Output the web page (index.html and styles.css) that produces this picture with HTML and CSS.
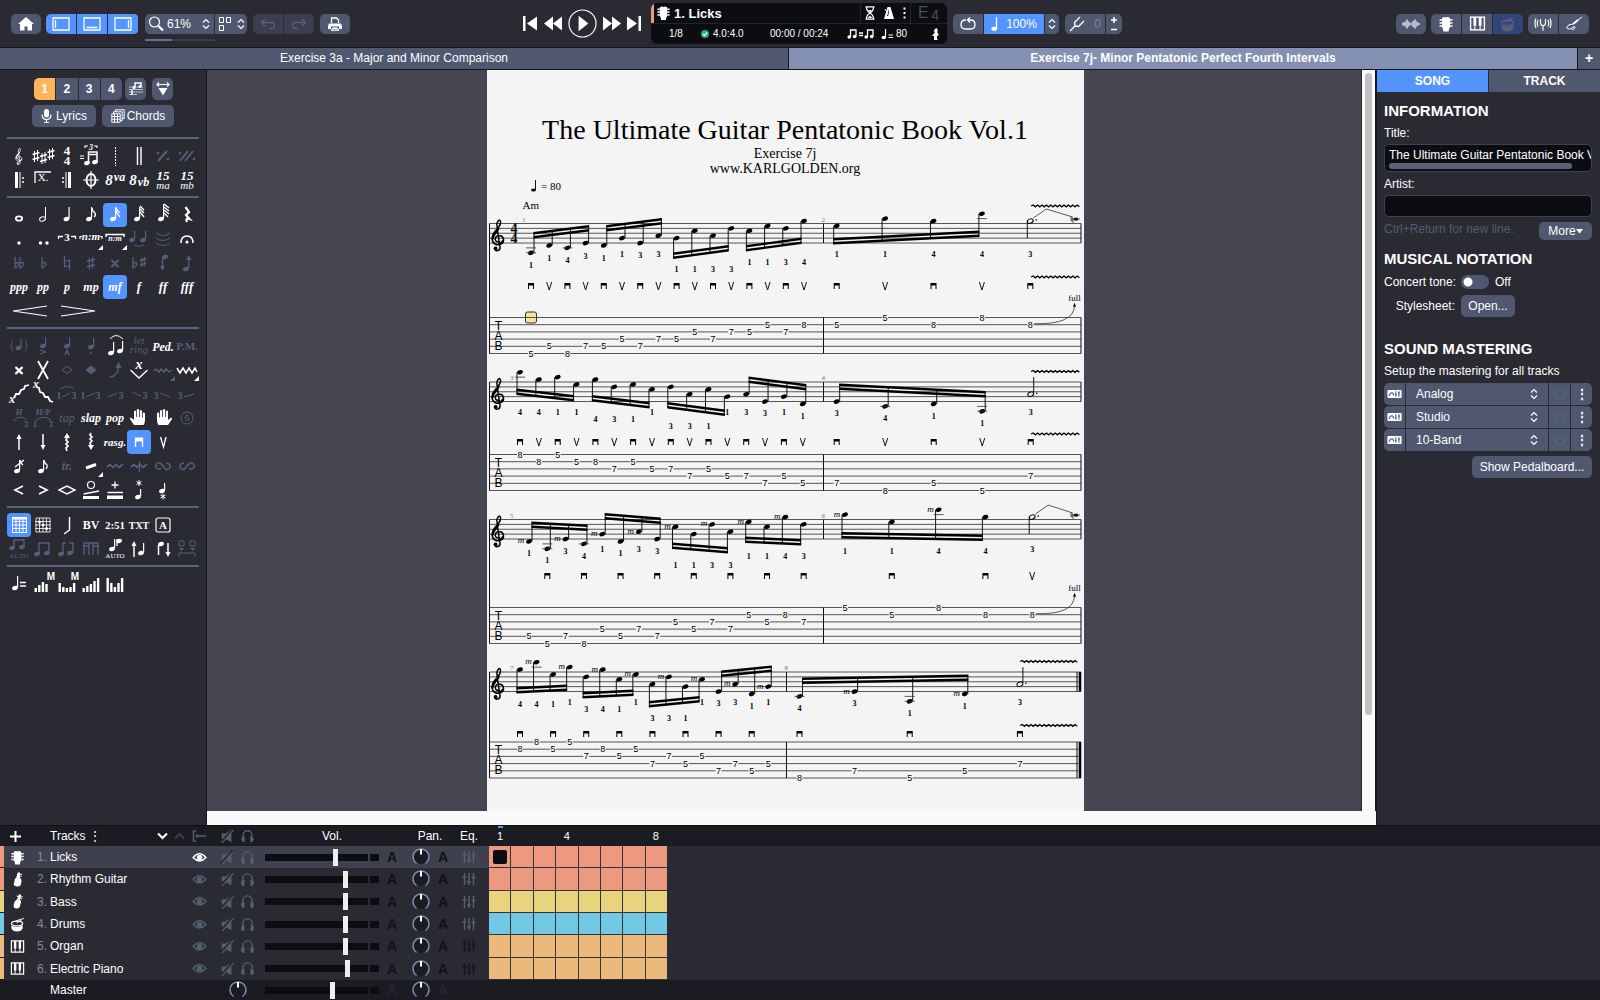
FILE: index.html
```html
<!DOCTYPE html>
<html lang="en">
<head>
<meta charset="utf-8">
<title>Exercise 7j- Minor Pentatonic Perfect Fourth Intervals</title>
<link rel="stylesheet" href="styles.css">
</head>
<body>
<svg class="sprite" aria-hidden="true">
  <symbol id="guitar" viewBox="0 0 16 16"><path d="M4 2Q6 .5 8 1.500Q10 .5 12 2L12 11Q11 12 10.500 15.500H5.500Q5 12 4 11Z"/><path class="ln" stroke-width="1.600" d="M1.500 4H4M1.500 7H4M1.500 10H4M12 4H14.500M12 7H14.500M12 10H14.500"/></symbol>
  <symbol id="axe" viewBox="0 0 16 16"><path d="M8 1Q10-.5 11 1.500L10.500 6Q13 8 12 11Q12 15.500 8 15.500Q3.500 15.500 4 12Q5 10 5 8L7 5Z"/><path class="ln" d="M11 2.500H13M10.500 4.500H12.500"/></symbol>
  <symbol id="bass" viewBox="0 0 16 16"><path d="M9 1Q11-.5 12 1.500L10.500 6Q13 8 11 11Q11 15.500 7 15.500Q3 15 4 12Q4 10 5 8L8 5Z"/><path class="ln" d="M11 3H13.500M10.500 5H13M7 2L8.500 3"/></symbol>
  <symbol id="drum" viewBox="0 0 16 16"><ellipse class="ln" stroke-width="1.300" cx="7.500" cy="7" rx="6" ry="2.500"/><path d="M1.500 9Q7.500 12 13.500 9V12Q12 15.500 7.500 15.500Q3 15.500 1.500 12Z"/><path class="ln" d="M7 6.500L15 1M6 4.500L12 2"/></symbol>
  <symbol id="keys" viewBox="0 0 16 16"><rect class="ln" stroke-width="1.300" x="1.500" y="2" width="13" height="12"/><path class="ln" d="M5.500 9V14M10.500 9V14"/><path d="M4.200 2h2.600v8H4.200zM9.200 2h2.600v8H9.200z"/></symbol>
  <symbol id="eye" viewBox="0 0 16 12"><path class="ln" stroke-width="1.500" d="M1 6Q8-2.500 15 6Q8 13.500 1 6Z"/><circle cx="8" cy="6" r="3"/></symbol>
  <symbol id="mute" viewBox="0 0 16 16"><path d="M2 5H6L13 1V15L6 11H2Z"/><path class="cut" d="M1 15.500L15 .5"/><path class="ln" stroke-width="1.300" d="M2.500 16L15.500 1.500"/></symbol>
  <symbol id="phones" viewBox="0 0 16 16"><path class="ln" stroke-width="1.500" d="M3 11V7A5 5 0 0 1 13 7V11"/><path d="M4.800 8.500V15Q1 15 1 11.700Q1 8.500 4.800 8.500ZM11.200 8.500V15Q15 15 15 11.700Q15 8.500 11.200 8.500Z"/></symbol>
  <symbol id="eq" viewBox="0 0 14 16"><path class="ln" stroke-width="1.500" d="M2.500 2V14M7 2V14M11.500 2V14M.5 6H4.500M5 11H9M9.500 6.500H13.500"/></symbol>
  <symbol id="knob" viewBox="0 0 20 20"><circle class="knob-face" cx="10" cy="10" r="7"/><path class="knob-ring" d="M5.500 16.500A8 8 0 1 1 14.500 16.500"/><path class="knob-mark" d="M10 2V7.500"/></symbol>
  <symbol id="updown" viewBox="0 0 8 12"><path class="ln" stroke-width="1.200" d="M1 4.500L4 1.500L7 4.500M1 7.500L4 10.500L7 7.500"/></symbol>
  <symbol id="clef" viewBox="-8 -21 16 36" overflow="visible"><path class="ln" stroke-width="1.500" d="M1 3C-2 4-4 1-2-1.500C0-4 5-3 5.500 1C6 5 1 7.500-3 5.500C-7 3-7-3-3-7C1-11 3-14 2.500-17C2-19.500 0-19-1-15C-1.500-13 1 2 2 8C2.600 12-1.500 13.500-3 11"/><path class="ln" stroke-width="2" d="M-5.500 1C-5-4-1-7 1-10.500M5.200 2Q3.500 5.500 0 5.600"/><circle cx="-2.400" cy="10" r="2"/></symbol>
  <symbol id="amp" viewBox="0 0 16 9"><rect width="16" height="9" rx="1"/><path class="amp-mark" d="M2 6.500Q3 3 5 3Q7 3 7 6.500M9.500 1.500V7.500M13 1.500V7.500M8.500 5H10.500M12 3.500H14"/></symbol>
  <symbol id="power" viewBox="0 0 14 14"><path class="ln" stroke-width="1.500" d="M4 3A5 5 0 1 0 10 3M7 1V7"/></symbol>
</svg>

<header class="toolbar">
  <div class="tools-left">
    <button class="btn" aria-label="Home"><svg width="16" height="14" viewBox="0 0 16 14"><path d="M8 0L16 7H14V13.500H9.500V9.500H6.500V13.500H2V7H0Z"/></svg></button>
    <div class="group blue">
      <button aria-label="Left panel"><svg width="18" height="14" viewBox="0 0 18 14"><path class="ln" stroke-width="1.300" d="M1 1H17V13H1ZM3.500 3V11"/></svg></button>
      <button aria-label="Bottom panel"><svg width="18" height="14" viewBox="0 0 18 14"><path class="ln" stroke-width="1.300" d="M1 1H17V13H1ZM3.500 10.500H14.500"/></svg></button>
      <button aria-label="Right panel"><svg width="18" height="14" viewBox="0 0 18 14"><path class="ln" stroke-width="1.300" d="M1 1H17V13H1ZM14.500 3V11"/></svg></button>
    </div>
    <div class="zoomer">
      <div class="group">
        <label class="zoom"><svg width="16" height="16" viewBox="0 0 16 16"><circle class="ln" stroke-width="1.200" cx="6.500" cy="6" r="5"/><path class="ln" stroke-width="2.200" d="M10.500 10L15 14.500"/></svg><select aria-label="Zoom"><option>61%</option></select><svg width="8" height="12"><use href="#updown"/></svg></label>
        <button class="layout" aria-label="Page layout"><svg width="14" height="16" viewBox="0 0 14 16"><path class="ln" d="M1.500 1.500H5.500V6.500H1.500ZM8.500 1.500H12.500V6.500H8.500ZM1.500 9.500H5.500V14.500H1.500Z"/></svg><svg width="8" height="12"><use href="#updown"/></svg></button>
      </div>
      <div class="zoom-bar"></div>
    </div>
    <div class="group off">
      <button aria-label="Undo"><svg width="16" height="12" viewBox="0 0 16 12"><path class="ln" stroke-width="1.300" d="M5 1L1.500 4.500L5 8M1.500 4.500H11Q14.500 4.500 14.500 7.500Q14.500 10.500 11 10.500H9.500"/></svg></button>
      <button aria-label="Redo"><svg width="16" height="12" viewBox="0 0 16 12"><path class="ln" stroke-width="1.300" d="M11 1L14.500 4.500L11 8M14.500 4.500H5Q1.500 4.500 1.500 7.500Q1.500 10.500 5 10.500H6.500"/></svg></button>
    </div>
    <button class="btn" aria-label="Print"><svg width="14" height="14" viewBox="0 0 14 14"><path class="ln" stroke-width="1.300" d="M3.500 6V1H8.500L10.500 3V6"/><path fill-rule="evenodd" d="M1 6.500H13L14 9V12H0V9ZM3 9.500V13.800H11V9.500ZM4.200 10.500H9.800V12.600H4.200Z"/></svg></button>
  </div>

  <div class="tools-mid">
    <div class="transport">
      <button aria-label="First bar"><svg width="14" height="15" viewBox="0 0 14 15"><path d="M0 0H2.500V15H0ZM14 .5V14.500L4 7.500Z"/></svg></button>
      <button aria-label="Rewind"><svg width="18" height="15" viewBox="0 0 18 15"><path d="M9 .5V14.500L0 7.500ZM18 .5V14.500L9 7.500Z"/></svg></button>
      <button aria-label="Play"><svg width="29" height="29" viewBox="0 0 30 30"><circle class="ln" stroke-width="1.200" cx="15" cy="15" r="14"/><path d="M11 7V23L21 15Z"/></svg></button>
      <button aria-label="Forward"><svg width="18" height="15" viewBox="0 0 18 15"><path d="M0 .5V14.500L9 7.500ZM9 .5V14.500L18 7.500Z"/></svg></button>
      <button aria-label="Last bar"><svg width="14" height="15" viewBox="0 0 14 15"><path d="M11.500 0H14V15H11.500ZM0 .5V14.500L10 7.500Z"/></svg></button>
    </div>
    <div class="display">
      <div class="row1">
        <div class="track-now"><svg width="15" height="16"><use href="#guitar"/></svg><b>1. Licks</b></div>
        <div class="clicks">
          <svg width="10" height="14" viewBox="0 0 10 14"><path class="ln" stroke-width="1.300" d="M.5 .8H9.500M.5 13.200H9.500M1.500 1Q1.500 5 5 7Q8.500 9 8.500 13M8.500 1Q8.500 5 5 7Q1.500 9 1.500 13"/><path d="M3 4H7L5 6.500ZM2.500 12L5 9.500L7.500 12Z"/></svg>
          <svg width="12" height="14" viewBox="0 0 12 14"><path fill-rule="evenodd" d="M4.500 1H7.500L11 13H1ZM5.500 3L4 10H6Z"/><path class="ln" d="M6 10L2 3"/></svg>
          <svg width="3" height="12" viewBox="0 0 3 12"><path d="M.5 .5h2v2h-2zM.5 5h2v2h-2zM.5 9.500h2v2h-2z"/></svg>
        </div>
        <div class="chord">E <span>4</span></div>
      </div>
      <div class="row2">
        <span class="bar-no">1/8</span>
        <span class="beat"><svg width="8" height="8" viewBox="0 0 8 8"><circle class="ok" cx="4" cy="4" r="4"/><path class="ln" stroke-width="1.200" d="M2 4L3.500 5.500L6 2.500"/></svg>4.0:4.0</span>
        <span class="clock">00:00 / 00:24</span>
        <svg width="27" height="11" viewBox="0 0 27 11"><path class="ln" stroke-width="1.300" d="M3.500 9V2H9V8M20.500 9V2H26V8M12 5H16M12 7.500H16"/><circle cx="2.200" cy="9" r="1.800"/><circle cx="7.700" cy="8.500" r="1.800"/><circle cx="19.200" cy="9" r="1.800"/><circle cx="24.700" cy="8.500" r="1.800"/></svg>
        <span class="tempo"><svg width="12" height="12" viewBox="0 0 12 12"><path class="ln" stroke-width="1.200" d="M4.500 9.500V1M7.500 7H12M7.500 9.500H12"/><ellipse cx="2.800" cy="9.500" rx="2.200" ry="1.700"/></svg>80</span>
        <svg class="capo" width="7" height="12" viewBox="0 0 7 12"><path d="M1.500 3L4 0L5.500 1V5L7 7L5 8V11L6 12H2V8H0L3 4Z"/></svg>
      </div>
    </div>
    <div class="group speed">
      <button class="loop" aria-label="Loop"><svg width="16" height="14" viewBox="0 0 16 14"><path class="ln" stroke-width="1.300" d="M6 3H5.500Q1 3 1 7.500Q1 12 5.500 12H10.500Q15 12 15 7.500Q15 3 10.500 3H7.500M10 .5L7.500 3L10 5.500"/></svg></button>
      <button class="rate"><svg width="8" height="14" viewBox="0 0 8 14"><path class="ln" stroke-width="1.300" d="M5.500 12V0"/><ellipse cx="3.200" cy="11.800" rx="2.800" ry="2"/></svg>100%</button>
      <button class="step" aria-label="Speed step"><svg width="8" height="12"><use href="#updown"/></svg></button>
    </div>
    <div class="group tune">
      <button class="fork"><svg width="16" height="16" viewBox="0 0 16 16"><path class="ln" stroke-width="1.400" d="M1 15L6 10M6 10L5.500 6.500L11 1M6 10L9.500 10.500L15 5"/></svg><span>0</span></button>
      <button class="step" aria-label="Transpose"><svg width="8" height="16" viewBox="0 0 8 16"><path class="ln" stroke-width="1.500" d="M1 4H7M4 1V7M1 13.500H7"/></svg></button>
    </div>
  </div>

  <div class="tools-right">
    <button class="btn" aria-label="Audio"><svg width="18" height="12" viewBox="0 0 18 12"><path class="ln" stroke-width="1.200" d="M1 4.500V7.500M3 3.500V8.500M5 1.500V10.500M7 3.500V8.500M9 5V7M11 3V9M13 1.500V10.500M15 3.500V8.500M17 5V7"/></svg></button>
    <div class="group">
      <button aria-label="Fretboard"><svg width="16" height="16"><use href="#guitar"/></svg></button>
      <button aria-label="Keyboard"><svg width="17" height="17"><use href="#keys"/></svg></button>
      <button class="drum-off" aria-label="Drum pads"><svg width="16" height="16"><use href="#drum"/></svg></button>
    </div>
    <div class="group">
      <button aria-label="Tuner"><svg width="18" height="14" viewBox="0 0 18 14"><path class="ln" stroke-width="1.200" d="M6.500 2V6Q6.500 8.500 9 8.500Q11.500 8.500 11.500 6V2M9 8.500V13.500M4 3Q2.500 6 4 9.500M14 3Q15.500 6 14 9.500M2 1.500Q0 6 2 11M16 1.500Q18 6 16 11"/></svg></button>
      <button aria-label="Line in"><svg width="18" height="14" viewBox="0 0 18 14"><path class="ln" stroke-width="2" d="M8 7L13 3"/><path class="ln" d="M13 3L17 0M8 7Q1 8 2 11Q4 13.500 7 11Q9 9 10 10Q10 12 7 13"/></svg></button>
    </div>
  </div>
</header>

<nav class="tabs">
  <a href="#ex3a">Exercise 3a - Major and Minor Comparison</a>
  <a href="#ex7j" class="active">Exercise 7j- Minor Pentatonic Perfect Fourth Intervals</a>
  <button aria-label="New tab">+</button>
</nav>

<main class="workspace">
  <aside class="palette">
    <div class="voices">
      <div class="group"><button class="cur">1</button><button>2</button><button>3</button><button>4</button></div>
      <button class="sq" aria-label="Multivoice"><svg width="14" height="14" viewBox="0 0 14 14"><path class="ln" d="M0 5H14M0 7.500H14M0 10H14M0 12.500H8" opacity=".6"/><path class="ln" stroke-width="1.500" d="M6 5V1H12V4M3 13V8"/><circle cx="5" cy="5.500" r="1.600"/><circle cx="11" cy="4.500" r="1.600"/></svg></button>
      <button class="sq wide-gap" aria-label="Design mode"><svg width="14" height="14" viewBox="0 0 14 14"><path class="ln" stroke-width="1.200" d="M1 2.500H13M3 .5L1 2.500L3 4.500M11 .5L13 2.500L11 4.500"/><path d="M2.500 6H11.500L7 13.500Z"/></svg></button>
    </div>
    <div class="words">
      <button><svg width="11" height="14" viewBox="0 0 11 14"><rect x="3" y="0" width="5" height="8.500" rx="2.500"/><path class="ln" stroke-width="1.200" d="M1 5.500Q1 10.500 5.500 10.500Q10 10.500 10 5.500M5.500 10.500V13.500M3 13.500H8"/></svg>Lyrics</button>
      <button class="chords"><svg width="14" height="14" viewBox="0 0 14 14"><path class="ln" d="M4.500 3V.8H13.200V9.500H11M2.500 5V2.800H11.200V11.500H9M.8 4.800H9.200V13.200H.8ZM3.500 5V13M6.500 5V13M1 7.500H9M1 10.200H9"/></svg>Chords</button>
    </div>
    <div id="palette"></div>
  </aside>

  <section class="viewer">
    <div class="canvas">
      <article class="sheet">
        <h1>The Ultimate Guitar Pentatonic Book Vol.1</h1>
        <p>Exercise 7j</p>
        <p>www.KARLGOLDEN.org</p>
        <svg id="score" width="597" height="635" viewBox="487 176 597 635" role="img" aria-label="Score"></svg>
      </article>
    </div>
    <div class="scroll"><div class="thumb"></div></div>
  </section>

  <aside class="inspector">
    <div class="itabs"><button class="active">SONG</button><button>TRACK</button></div>
    <form>
      <h2>INFORMATION</h2>
      <label class="cap" for="title">Title:</label>
      <div class="field"><input id="title" type="text" value="The Ultimate Guitar Pentatonic Book Vol.1"><div class="hbar"></div></div>
      <label class="cap" for="artist">Artist:</label>
      <div class="field"><input id="artist" type="text"></div>
      <div class="hint"><span>Ctrl+Return for new line.</span><button type="button" class="more">More<svg width="7" height="5" viewBox="0 0 7 5"><path d="M0 0H7L3.500 4.500Z"/></svg></button></div>
      <h2>MUSICAL NOTATION</h2>
      <div class="line"><label for="tone">Concert tone:</label><input id="tone" type="checkbox" class="switch"><span>Off</span></div>
      <div class="line style"><span class="lab">Stylesheet:</span><button type="button" class="open">Open...</button></div>
      <h2 class="sound">SOUND MASTERING</h2>
      <p class="setup">Setup the mastering for all tracks</p>
      <div class="fx"><button type="button" aria-label="Analog effect"><svg width="15" height="8"><use href="#amp"/></svg></button><label><select aria-label="Analog"><option>Analog</option></select><svg width="8" height="12"><use href="#updown"/></svg></label><button type="button" class="pw" aria-label="Power"><svg width="14" height="14"><use href="#power"/></svg></button><button type="button">⋮</button></div>
      <div class="fx"><button type="button" aria-label="Studio effect"><svg width="15" height="8"><use href="#amp"/></svg></button><label><select aria-label="Studio"><option>Studio</option></select><svg width="8" height="12"><use href="#updown"/></svg></label><button type="button" class="pw" aria-label="Power"><svg width="14" height="14"><use href="#power"/></svg></button><button type="button">⋮</button></div>
      <div class="fx"><button type="button" aria-label="Equalizer effect"><svg width="15" height="8"><use href="#amp"/></svg></button><label><select aria-label="10-Band"><option>10-Band</option></select><svg width="8" height="12"><use href="#updown"/></svg></label><button type="button" class="pw" aria-label="Power"><svg width="14" height="14"><use href="#power"/></svg></button><button type="button">⋮</button></div>
      <button type="button" class="pedal">Show Pedalboard...</button>
    </form>
  </aside>
</main>

<footer class="mixer">
  <div class="trow head">
    <button class="plus" aria-label="Add track"><svg width="11" height="11" viewBox="0 0 11 11"><path class="ln" stroke-width="2" d="M0 5.500H11M5.500 0V11"/></svg></button>
    <div class="tname"><span>Tracks&nbsp;⋮</span><svg width="28" height="8" viewBox="0 0 28 8"><path class="ln" stroke-width="2" d="M1 1.500L5.500 6L10 1.500"/><path class="ln fade" stroke-width="2" d="M18 6.500L22.500 2L27 6.500"/></svg></div>
    <svg class="dimico" width="14" height="12" viewBox="0 0 14 12"><path class="ln" stroke-width="1.500" d="M4 1H1.500V11H4M4 6H14M5 4V8"/></svg>
    <svg class="dimico" width="14" height="14"><use href="#mute"/></svg>
    <svg class="dimico" width="15" height="14"><use href="#phones"/></svg>
    <span class="vol-h">Vol.</span><span class="pan-h">Pan.</span><span>Eq.</span>
    <div class="ruler"><span>1</span><span></span><span></span><span>4</span><span></span><span></span><span></span><span>8</span></div>
  </div>
  <div class="rows" id="tracks"></div>
  <div class="trow master">
    <span class="tname">Master</span>
    <svg class="mknob" width="20" height="20"><use href="#knob"/></svg>
    <input type="range" aria-label="Master volume" value="60">
    <b class="auto">A</b>
    <svg width="20" height="20"><use href="#knob"/></svg>
    <b class="auto">A</b>
  </div>
</footer>
<script src="app.js"></script>
</body>
</html>
```
FILE: styles.css
```css
* { box-sizing: border-box; }
:root { --bg: #2a2a33; --btn: #505870; --blue: #5494ff; --dark: #1b1c22; --black: #0c0d11; --paper: #f4f4f4; }
html, body { height: 100%; }
body { margin: 0; display: grid; grid-template-rows: 48px 22px 1fr 175px; grid-template-columns: minmax(0, 1fr); background: var(--bg); color: #fff; font: 12px "Liberation Sans", Arial, sans-serif; overflow: hidden; }
button, input, select { font: inherit; color: inherit; border: 0; margin: 0; padding: 0; background: none; appearance: none; }
button { display: flex; align-items: center; justify-content: center; }
svg { fill: currentColor; flex: none; }
.sprite { position: absolute; width: 0; height: 0; }
.ln { fill: none; stroke: currentColor; }
.cut { fill: none; stroke: var(--bg); stroke-width: 3; }
.knob-face { fill: #1b1c22; }
.knob-ring { fill: none; stroke: #8490b8; stroke-width: 1.5; }
.knob-mark { fill: none; stroke: #fff; stroke-width: 2; }
.amp-mark { fill: none; stroke: var(--btn); stroke-width: 1.2; }
h1, h2, p { margin: 0; }

/* toolbar */
.toolbar { display: flex; align-items: center; padding: 0 11px; border-bottom: 1px solid #15161b; }
.tools-left, .tools-right { display: flex; gap: 5px; }
.tools-left > :nth-child(n+3) { margin-left: 1px; }
.tools-right { margin-left: auto; }
.btn { width: 30px; height: 20px; background: var(--btn); border-radius: 5px; }
.group { display: flex; gap: 1px; border-radius: 5px; overflow: hidden; height: 20px; }
.group > * { background: var(--btn); width: 30px; height: 100%; }
.group.blue > * { background: var(--blue); width: 30px; }
.group.blue { width: 93px; }
.group.off > * { background: #3a3e4e; color: #5a6078; }
.zoomer { position: relative; }
.group .zoom { width: 69px; display: flex; align-items: center; padding: 0 4px 0 3px; gap: 2px; }
.zoom select { width: 42px; font-size: 12px; padding-left: 1px; }
.group .layout { width: 32px; gap: 5px; }
.zoom-bar { position: absolute; left: 0; top: 25px; width: 70px; height: 2px; background: linear-gradient(90deg, #6c7288 39%, #383c4a 39%); }
.tools-mid { display: flex; align-items: center; margin-left: 173px; }
.transport { display: flex; align-items: center; gap: 6px; padding-right: 10px; }
.transport button:nth-child(1) { margin-right: 1px; }
.display { width: 296px; height: 41px; background: var(--black); border-radius: 6px; overflow: hidden; margin-right: 6px; }
.row1 { display: grid; grid-template-columns: 1fr 51px 36px; height: 21px; border-bottom: 1px solid #22242c; }
.track-now { display: flex; align-items: center; gap: 3px; font-size: 13px; border-left: 3px solid #ed9980; padding-left: 2px; }
.clicks { display: flex; align-items: center; justify-content: space-around; border-left: 1px solid #22242c; border-right: 1px solid #22242c; }
.chord { color: #474c66; font-size: 16px; padding: 1px 0 0 7px; }
.chord span { font-size: 14px; position: relative; top: 2px; left: -2px; }
.row2 { display: flex; align-items: center; height: 19px; font-size: 10px; padding-left: 18px; }
.bar-no { width: 32px; }
.beat { display: flex; align-items: center; gap: 4px; width: 69px; }
.clock { width: 77px; }
.row2 > svg { margin-right: 7px; }
.tempo { display: flex; align-items: center; gap: 3px; width: 51px; }
.ok { fill: #22b573; }
.row2 .capo { margin: 0; }
.speed { width: 106px; margin-right: 6px; }
.speed .rate { width: 60px; background: var(--blue); gap: 7px; }
.speed .step { width: 14px; }
.tune .fork { width: 40px; gap: 9px; color: #fff; }
.fork span { color: #7f8597; }
.tune .step { width: 16px; }
.tools-right .drum-off { background: #30457a; color: #5a6078; }

/* document tabs */
.tabs { display: grid; grid-template-columns: 1fr 1fr 22px; gap: 1px; background: #15161b; border-bottom: 1px solid #15161b; }
.tabs > * { background: var(--btn); color: #fff; text-decoration: none; text-align: center; line-height: 21px; }
.tabs .active { background: #8490b2; font-weight: bold; }
.tabs button { font-weight: bold; font-size: 14px; }

.workspace { display: grid; grid-template-columns: 207px minmax(0, 1fr) 224px; min-height: 0; }

/* palette */
.palette { border-right: 1px solid #17181d; padding: 8px 7px 0; overflow: hidden; }
.voices { display: flex; margin-left: 27px; gap: 3px; }
.voices .group { height: 22px; width: 88px; font-weight: bold; }
.voices .group > * { flex: 1; }
.voices .group .cur { background: #ffb45c; }
.sq { width: 21px; height: 22px; border-radius: 5px; background: var(--btn); }
.wide-gap { margin-left: 3px; }
.words { display: flex; gap: 6px; margin: 5px 0 10px 25px; }
.words button { width: 64px; height: 22px; border-radius: 5px; background: var(--btn); gap: 4px; }
.words .chords { width: 72px; gap: 2px; }
.bank { display: grid; grid-template-columns: repeat(8, 24px); grid-auto-rows: 24px; border-top: 2px solid #59627f; padding: 5px 0 4px; }
.tool { width: 24px; height: 24px; border-radius: 4px; overflow: visible; }
.tool.wide { width: 48px; grid-column: span 2; }
.tool svg { overflow: visible; }
.tool.off { color: #565e7c; }
.tool.on { background: var(--blue); }
.serif { font-family: "Liberation Serif", "Times New Roman", serif; text-anchor: middle; }
.bi { font-weight: bold; font-style: italic; }
.it { font-style: italic; }
.bd { font-weight: bold; }
.sans { font-family: "Liberation Sans", Arial, sans-serif; text-anchor: middle; }

/* viewer */
.viewer { display: grid; grid-template-columns: minmax(0, 1fr) 14px; padding-bottom: 14px; background: #fafafa; min-height: 0; }
.canvas { background: #454651; display: flex; justify-content: center; overflow: hidden; border-right: 1px solid #26262e; padding-left: 2px; }
.sheet { background: var(--paper); color: #000; width: 597px; flex: none; padding-top: 44px; text-align: center; font: 14px/15px "Liberation Serif", "Times New Roman", serif; }
.sheet h1 { font-size: 28px; line-height: 32px; font-weight: normal; }
.sheet svg { display: block; }
.scroll { padding: 3px 3px 0 3px; border-right: 1px solid #17181d; }
.thumb { height: 87%; width: 7px; border-radius: 4px; background: #c1c1c1; }
.staffline { stroke: #111; stroke-width: 1; fill: none; stroke-opacity: .7; }
.barline { stroke: #111; stroke-width: 1; fill: none; }
.thick { stroke: #000; stroke-width: 2.5; fill: none; }
.hair { stroke: #333; stroke-width: .8; fill: none; }
.vee { stroke: #111; stroke-width: 1; fill: none; }
.wave { stroke: #000; stroke-width: 1.3; fill: none; }
.beam { fill: #000; }
.mask { fill: var(--paper); }
.num { font-size: 8px; text-anchor: middle; font-family: "Liberation Serif", serif; font-weight: bold; }
.fret { font-size: 9px; text-anchor: middle; font-family: "Liberation Sans", sans-serif; }
.mno { font-size: 7px; fill: #777; }
.full { font-size: 9px; text-anchor: middle; }
.tabword { font: 12px "Liberation Sans", sans-serif; text-anchor: middle; }
.meter { font: bold 14px "Liberation Serif", serif; text-anchor: middle; }
.mark { font-size: 11px; text-anchor: start; font-family: "Liberation Serif", serif; }
.mute { font: italic 9px "Liberation Serif", serif; text-anchor: middle; }
.cursor { fill: #fae0a0; stroke: #333; }

/* inspector */
.inspector { border-left: 1px solid #17181d; overflow: hidden; }
.itabs { display: grid; grid-template-columns: 1fr 1fr; gap: 1px; height: 22px; font-weight: bold; }
.itabs button { background: var(--btn); }
.itabs .active { background: var(--blue); }
.inspector form { padding: 9px 8px 0 7px; }
.inspector h2 { font-size: 15px; line-height: 20px; }
.cap { display: block; line-height: 16px; margin: 4px 0 3px; }
.field { border: 1px solid #3b4254; border-radius: 5px; background: var(--black); padding: 2px 0 2px 4px; }
.field input { display: block; width: 100%; height: 16px; outline: 0; }
.hbar { width: 183px; height: 6px; border-radius: 3px; background: #59617c; }
.hint { display: flex; justify-content: space-between; color: #545b74; line-height: 20px; margin: 2px 0 9px; }
.hint button, .open, .pedal { background: var(--btn); border-radius: 5px; color: #fff; }
.more { width: 53px; height: 18px; margin-top: 3px; }
.line { display: grid; grid-template-columns: 71px 28px 1fr; column-gap: 6px; align-items: center; height: 22px; margin-top: 2px; white-space: nowrap; }
.line.style { margin-top: 2px; grid-template-columns: 71px 54px; }
.lab { text-align: right; }
.open { height: 22px; }
.switch { width: 28px; height: 14px; border-radius: 7px; background: radial-gradient(circle at 7px 7px, #fff 4px, var(--btn) 5px); }
.inspector .sound { margin-top: 22px; }
.setup { line-height: 16px; margin: 4px 0; }
.fx { display: grid; grid-template-columns: 21px 1fr 21px 21px; gap: 1px; height: 22px; margin-bottom: 1px; border-radius: 5px; overflow: hidden; }
.fx > * { background: var(--btn); }
.fx label { display: flex; align-items: center; padding: 0 10px; }
.fx select { flex: 1; }
.pw { color: #4c6b74; }
.fx button { font-weight: bold; }
.pedal { width: 120px; height: 22px; margin: 5px 0 0 auto; }

/* mixer */
.mixer { background: var(--dark); border-top: 1px solid #101115; display: grid; grid-template-rows: 20px 134px 20px; }
.rows { display: grid; grid-template-rows: repeat(6, 1fr); background: var(--bg); }
.trow { display: grid; grid-template-columns: 4px 26px 20px 135px 28px 27px 15px 124px 26px 32px 12px 40px 178px; align-items: center; justify-items: center; }
.trow .strip { align-self: stretch; justify-self: stretch; border-bottom: 1px solid var(--dark); }
.trow.sel { background: linear-gradient(90deg, #3e404e 489px, var(--bg) 489px); }
.tno { justify-self: end; padding-right: 3px; color: #868a9c; }
.tname { justify-self: start; }
.dimico, .trow .dim { color: #50626f; }
.trow .dark { color: #15161b; }
.auto { color: #101115; font-size: 14px; }
.trow input[type=range] { width: 114px; height: 17px; justify-self: end; background: linear-gradient(90deg, var(--black) 103px, transparent 103px, transparent 105px, var(--black) 105px) center / 114px 7px no-repeat; }
input[type=range]::-webkit-slider-thumb { appearance: none; width: 5px; height: 17px; background: #eee; }
.cells { display: grid; grid-template-columns: repeat(8, 1fr); gap: 1px; align-self: stretch; justify-self: stretch; padding-bottom: 1px; background: #33333b; }
.cells i { display: block; }
.salmon i, .strip.salmon { background: #ed9980; }
.yellow i, .strip.yellow { background: #e9d37c; }
.sky i, .strip.sky { background: #72c9e3; }
.sand i, .strip.sand { background: #ebb97b; }
.cells .here { display: grid; place-items: center; }
.here::after { content: ""; width: 14px; height: 14px; border-radius: 2px; background: #0c0d11; }
.head .plus { grid-column: 2; padding-right: 4px; }
.head .tname { grid-column: 4; justify-self: stretch; display: flex; justify-content: space-between; align-items: center; }
.fade { color: #3a3c46; }
.vol-h { padding-left: 30px; }
.pan-h { grid-column: 10; padding-left: 18px; }
.head > span:last-of-type { grid-column: 12; }
.ruler { display: grid; grid-template-columns: repeat(8, 1fr); align-self: stretch; justify-self: stretch; text-align: center; font-size: 11px; line-height: 20px; background: linear-gradient(var(--blue), var(--blue)) 9px 0 / 5px 2px no-repeat; }
.master .tname { grid-column: 4; }
.master .mknob { grid-column: 6 / 8; margin-left: 7px; }
.master .auto { color: #25262d; }
```
FILE: app.js
```js
/* ---- shared glyph helpers ---- */
const line = (d, w = 1) => `<path class="ln" stroke-width="${w}" d="${d}"/>`;
const dot = (x, y, r = 1) => `<circle cx="${x}" cy="${y}" r="${r}"/>`;
const head = (x, y, open) => `<ellipse cx="${x}" cy="${y}" rx="3" ry="2.1" transform="rotate(-22 ${x} ${y})"${open ? ' class="ln"' : ''}/>`;
const note = (x, y, len = 12) => head(x, y) + line(`M${x + 2.6} ${y - 1}V${y - len}`, 1.2);
const txt = (s, size, x = 12, y = 16, c = 'bi') => `<text class="serif ${c}" font-size="${size}" x="${x}" y="${y}">${s}</text>`;
const sharp = (x, y, s = 1) => `<g transform="translate(${x} ${y}) scale(${s})">${line('M-1.500 -5V6M1.500 -6V5')}${line('M-3.500 -1.500L3.500 -3.500M-3.500 3.500L3.500 1.500', 1.8)}</g>`;
const flat = (x, y) => line(`M${x} ${y - 7}V${y + 4}C${x + 6} ${y + 1} ${x + 4} ${y - 4} ${x} ${y}`, 1.3);
const corner = '<path d="M24 18V23H19Z"/>';
const hand = '<path d="M7 19L3 13Q2.500 11 4.500 12L7 14V5Q8.500 4 9 5.500V11H9.800V3.500Q11.500 2.500 12 4V11H12.800V4Q14.500 3.500 15 5V11.500H15.800V6.500Q17.500 6 18 7.500V14Q18 17 16.500 19Z"/>';
const bars = (hs, base = 20) => hs.map((h, i) => `<rect x="${3.500 + i * 3.6}" y="${base - h}" width="2.400" height="${h}"/>`).join('');

const banks = [
  [
    ['Clef', '<use href="#clef" x="7" y="3" width="10" height="19"/>'],
    ['Key signature', sharp(5, 12, 1) + sharp(12.5, 14, 1) + sharp(20, 10, 1)],
    ['Time signature', txt('4', 13, 12, 11, 'bd') + txt('4', 13, 12, 21, 'bd')],
    ['Triplet feel', line('M1 12H5M1 14.500H5M6 4V2H9M15 2H18V4', 1.2) + txt('3', 8, 12, 6) + line('M9.500 19V8H18V18M9.500 10.500H18', 1.5) + head(8, 19) + head(16, 18)],
    ['Free time', '<path class="ln" stroke-dasharray="2 1" d="M12.500 3V22"/>'],
    ['Double bar', line('M10.500 3V21M14 3V21', 1.4)],
    ['Repeat bar', line('M7 17L16 7', 2) + dot(7, 9, 1.3) + dot(17, 15, 1.3), 'off'],
    ['Repeat two bars', line('M5 17L13 7M10 17L18 7', 2) + dot(5, 9, 1.3) + dot(19, 15, 1.3), 'off'],
    ['Repeat open', line('M9.500 4V20', 3) + line('M13 4V20') + dot(16, 10) + dot(16, 14)],
    ['Alternate ending', line('M4 15V4H20', 1.3) + txt('X.', 11, 12, 13, '')],
    ['Repeat close', line('M14.500 4V20', 3) + line('M11 4V20') + dot(8, 10) + dot(8, 14)],
    ['Coda', '<ellipse class="ln" stroke-width="2" cx="12" cy="12" rx="4.500" ry="6"/>' + line('M12 3V21M4 12H20', 1.2)],
    ['Ottava alta', txt('8', 15, 6, 17) + txt('va', 12, 16.5, 13)],
    ['Ottava bassa', txt('8', 15, 6, 17) + txt('vb', 12, 16.5, 18)],
    ['Quindicesima alta', txt('15', 13, 12, 12) + txt('ma', 11, 12, 21, 'it')],
    ['Quindicesima bassa', txt('15', 13, 12, 12) + txt('mb', 11, 12, 21, 'it')],
  ], [
    ['Whole', '<ellipse class="ln" stroke-width="1.800" cx="12" cy="15.500" rx="3.200" ry="2.200"/>'],
    ['Half', head(11.5, 16, 1) + line('M14.500 15V4')],
    ['Quarter', note(11.5, 16)],
    ['Eighth', note(10, 16) + line('M13 5Q13 8 16 10Q17 13 15 14', 1.3)],
    ['Sixteenth', note(10, 16) + line('M13 5Q14 8 17 10M13 8Q14 11 17 14', 1.3), 'on'],
    ['Thirty-second', note(10, 16) + line('M13 3L17 7M13 6L17 10M13 9L17 14', 1.4)],
    ['Sixty-fourth', note(10, 16, 15) + line('M13 1L18 5M13 4L18 8M13 7L18 11M13 10L17 14', 1.4)],
    ['Rest', line('M10.500 4L14 9L11 12L14.500 16Q10 14.500 12 19', 2.2)],
    ['Dotted', dot(12, 16, 1.7)],
    ['Double dotted', dot(9.500, 16, 1.7) + dot(16, 16, 1.7)],
    ['Triplet', txt('3', 11, 12, 14, 'bd') + line('M3.500 12V9.500H8M16 9.500H20.500V12', 1.3)],
    ['Tuplet', txt('n:m', 11, 12, 13) + line('M1 12V9.500H3M21 9.500H23V12', 1.2) + corner],
    ['Tuplet over bars', line('M3 10V7.500H21V10', 1.5) + txt('n:m', 8, 12, 14) + corner],
    ['Tie', note(5, 13, 9) + note(16, 13, 9) + line('M7 18Q12 21 17 18'), 'off'],
    ['Legato ties', line('M5 6Q12 11 19 6M5 11Q12 16 19 11M5 16Q12 21 19 16'), 'off'],
    ['Fermata', line('M6 16Q6 9 12 9Q18 9 18 16', 1.5) + dot(12, 15, 1.5)],
    ['Double flat', flat(8, 13) + flat(13, 13), 'off'],
    ['Flat', flat(11, 13), 'off'],
    ['Natural', line('M9.500 5V16L14.500 14.500M14.500 19V9L9.500 10.500', 1.3), 'off'],
    ['Sharp', sharp(12, 12, 1.1), 'off'],
    ['Double sharp', line('M9 9.500L15 15.500M15 9.500L9 15.500', 2) + dot(9, 9.5) + dot(15, 15.5) + dot(15, 9.5) + dot(9, 15.5), 'off'],
    ['Enharmonic', flat(6, 13) + sharp(16, 11, .9), 'off'],
    ['Semitone down', head(14, 6) + line('M11.500 7V16', 1.3) + '<path d="M9 15H14L11.500 20Z"/>', 'off'],
    ['Semitone up', head(11, 18) + line('M13.800 17V7', 1.3) + '<path d="M11 9H16.500L13.800 4Z"/>', 'off'],
    ['Pianississimo', txt('ppp', 12)], ['Pianissimo', txt('pp', 12)], ['Piano', txt('p', 12)], ['Mezzo piano', txt('mp', 12)],
    ['Mezzo forte', txt('mf', 12), 'on'], ['Forte', txt('f', 13)], ['Fortissimo', txt('ff', 13)], ['Fortississimo', txt('fff', 13)],
    ['Crescendo', line('M40 7L6 12L40 17', 1.2), 'wide'],
    ['Decrescendo', line('M6 7L40 12L6 17', 1.2), 'wide'],
  ], [
    ['Ghost', note(11.500, 14, 9) + line('M6 7Q2 12 6 17M18 7Q22 12 18 17'), 'off'],
    ['Accent', note(12, 12, 9) + line('M9 16L15 18L9 20'), 'off'],
    ['Heavy accent', note(12, 12, 9) + line('M10 21L12 16.500L14 21', 1.4), 'off'],
    ['Staccato', note(12, 13, 9) + dot(12, 19), 'off'],
    ['Legato slide', note(8, 19, 11) + note(17, 17, 10) + line('M7 5Q13-2 20 5')],
    ['Let ring', txt('let', 11, 12, 10, 'it') + txt('ring', 11, 12, 19, 'it'), 'off'],
    ['Pedal', txt('Ped.', 12, 12, 17, 'bi')],
    ['Palm mute', txt('P.M.', 11, 12, 16, 'bd'), 'off'],
    ['Dead note', line('M9 9.500L15 15.500M15 9.500L9 15.500', 2.4) + dot(9, 9.5) + dot(15, 15.5) + dot(15, 9.5) + dot(9, 15.5)],
    ['Slap body', line('M7 3L17 21M17 3L7 21', 1.8)],
    ['Natural harmonic', line('M7 12L12 8.500L17 12L12 15.500Z'), 'off'],
    ['Artificial harmonic', '<path d="M6.500 12L12 7.500L17.500 12L12 16.500Z"/>', 'off'],
    ['Bend', line('M7 19Q15 18 15.500 9', 1.4) + '<path d="M12.500 10H18.500L15.500 4Z"/>', 'off'],
    ['Whammy', txt('x', 14, 12, 11) + line('M3.500 12L12 20L20.500 12', 1.3)],
    ['Vibrato', line('M3 13L5 11L8 14L10 11L13 14L15 11L18 14L21 12', 1.5) + corner, 'off'],
    ['Wide vibrato', line('M2 10L5 15L8 10L11 15L14 10L17 15L20 10L22 14', 1.5) + corner],
    ['Dive', line('M7 16L9 12L12 12L14 8L17 7L18 4L22 3', 1.8) + txt('x', 12, 5, 21)],
    ['Return', line('M5 5L8 6L9 10L12 11L14 15L17 15L19 19L22 20', 1.8) + txt('x', 12, 5, 6)],
    ['Legato slide to', txt('1', 10, 4, 17, 'bd') + txt('3', 10, 19, 17, 'bd') + line('M7 15L15 11M5 7Q12 2 19 7'), 'off'],
    ['Shift slide', txt('1', 10, 4, 17, 'bd') + txt('3', 10, 19, 17, 'bd') + line('M7 15L16 11'), 'off'],
    ['Slide in below', txt('3', 10, 18, 17, 'bd') + line('M5 15L14 11'), 'off'],
    ['Slide in above', txt('3', 10, 18, 17, 'bd') + line('M5 10L14 14'), 'off'],
    ['Slide out down', txt('3', 10, 5, 17, 'bd') + line('M9 11L19 15'), 'off'],
    ['Slide out up', txt('3', 10, 5, 17, 'bd') + line('M9 15L19 12'), 'off'],
    ['Hammer-on', txt('H', 9, 12, 9) + line('M6 15Q13 8 20 14') + txt('3', 9, 19, 21, 'bd'), 'off'],
    ['Pull-off', txt('H/P', 9, 12, 9) + line('M4 15Q12 8 20 14') + txt('1', 9, 4, 21, 'bd') + txt('3', 9, 20, 21, 'bd'), 'off'],
    ['Tap', txt('tap', 12, 12, 16, 'it'), 'off'], ['Slap', txt('slap', 12)], ['Pop', txt('pop', 12)],
    ['Left hand', hand], ['Right hand', `<g transform="translate(24 0) scale(-1 1)">${hand}</g>`],
    ['String number', '<circle class="ln" cx="12" cy="12" r="6"/>' + `<text class="sans" font-size="9" x="12" y="15">6</text>`, 'off'],
    ['Upstroke', line('M12 20V8', 1.5) + '<path d="M9.500 9H14.500L12 4Z"/>'],
    ['Downstroke', line('M12 4V16', 1.5) + '<path d="M9.500 15H14.500L12 20Z"/>'],
    ['Arpeggio up', line('M12 8L11 10L13 12L11 14L13 16L11 18L12 21', 1.7) + '<path d="M9 8H15L12 3Z"/>'],
    ['Arpeggio down', line('M12 3L11 5L13 7L11 9L13 11L11 13L12 16', 1.7) + '<path d="M9 15H15L12 20Z"/>'],
    ['Rasgueado', txt('rasg.', 11)],
    ['Pick down', line('M8.500 17V8M15.500 17V8', 1.3) + '<rect x="8" y="7.500" width="8" height="4"/>', 'on'],
    ['Pick up', line('M9.500 7L12.500 17L15 7', 1.3)],
    ['', '', 'gap'],
    ['Grace before', note(10, 17, 11) + line('M13 6Q13 9 16 11M8 13L17 6', 1.3)],
    ['Grace on beat', note(10, 17, 11) + line('M13 6Q13 9 16 11Q17 13 15 15', 1.3)],
    ['Trill', txt('tr.', 12), 'off'],
    ['Tremolo', line('M7 14L17 10.500', 3) + corner],
    ['Mordent', line('M4 13L7 10.500L10 13.500L13 10.500L16 13.500L20 10', 1.7), 'off'],
    ['Inverted mordent', line('M4 13L7 10.500L10 13.500L13 10.500L16 13.500L20 10', 1.7) + line('M12.500 7V18'), 'off'],
    ['Turn', line('M10 14A3 3 0 1 1 9.500 9.500Q12 11 13.500 14A3 3 0 1 0 15 9.500', 1.5), 'off'],
    ['Inverted turn', line('M14 14A3 3 0 1 0 14.500 9.500Q12 11 10.500 14A3 3 0 1 1 9 9.500', 1.5), 'off'],
    ['Fade in', line('M16 8L8 12L16 16', 1.7)], ['Fade out', line('M8 8L16 12L8 16', 1.7)],
    ['Swell', line('M4 12L12 8L20 12L12 16Z', 1.4)],
    ['Slap open', '<circle class="ln" stroke-width="1.200" cx="12" cy="7" r="3.500"/>' + line('M4.500 16L20 13', 1.5) + '<rect x="4" y="18" width="16" height="3"/>'],
    ['Wah closed', line('M8.500 7H15.500M12 3.500V10.500', 1.3) + line('M4.500 14.500H20', 1.5) + '<rect x="4" y="17.500" width="16" height="3.500"/>'],
    ['Pickup star', note(11, 19, 8) + line('M12 2V8M9.500 3.500L14.500 6.500M14.500 3.500L9.500 6.500')],
    ['Release star', note(11, 13, 8) + line('M12 15.500V21.500M9.500 17L14.500 20M14.500 17L9.500 20')],
  ], [
    ['Chord diagram', line('M5.500 5V20M9 5V20M12.500 5V20M16 5V20M19.500 5V20M5 8.500H20M5 12H20M5 15.500H20M5 19.500H20', .9) + '<rect x="5" y="4" width="15" height="2.500"/>', 'on'],
    ['Fretboard scale', line('M5 5H19V19H5ZM8.500 5V19M12 5V19M15.500 5V19M4 8.500H20M4 12H20M4 15.500H20', .8) + dot(8.5, 9, 1.5) + dot(12, 12, 1.5) + dot(15.5, 15.5, 1.5)],
    ['Slash rhythm', line('M14.500 4V17L9 21', 1.4)],
    ['Barre', txt('BV', 12, 12, 16, 'bd')], ['Timer', txt('2:51', 11, 12, 16, 'bd')], ['Text', txt('TXT', 10, 12, 16, 'bd')],
    ['Section', '<rect class="ln" stroke-width="1.200" x="5" y="5" width="14" height="14" rx="2"/>' + txt('A', 11, 12, 16, 'bd')],
    ['', '', 'gap'],
    ['Beam auto', line('M7 11V3H17V10', 1.4) + head(5, 11) + head(15, 10) + txt('AUTO', 7, 12, 21, ''), 'off'],
    ['Beam join', line('M8 17V6H18V16', 1.4) + head(6, 17) + head(16, 16), 'off'],
    ['Beam break', line('M8 17V6H11M14 6H18V16', 1.4) + head(6, 17) + head(15, 16), 'off'],
    ['Secondary beams', line('M5 18V6H19V18M10 18V6M14 18V6M5 9H10M14 9H19', 1.4), 'off'],
    ['Stem auto', note(9, 12, 10) + line('M14 9V2', 1.3) + head(16, 4) + txt('AUTO', 7, 12, 21, '')],
    ['Stem up', note(14, 16, 10) + line('M7 20V8', 1.5) + '<path d="M4.500 9H9.500L7 4Z"/>'],
    ['Stem down', head(10, 7) + line('M7.500 8V18M17 6V16', 1.5) + '<path d="M14.500 15H19.500L17 20Z"/>'],
    ['Reset beams', line('M4 4H9V9H4ZM15 4H20V9H15ZM4 20V16H20V20') + '<path d="M4 11H9L6.500 14ZM15 11H20L17.500 14Z"/>', 'off'],
  ], [
    ['Tempo', note(8, 16, 12) + line('M13 10.500H19M13 14H19', 1.7)],
    ['Volume master', bars([4, 7, 10, 8]) + `<text class="sans bd" font-size="10" x="20" y="8">M</text>`],
    ['Pan master', bars([9, 5, 4, 5, 9]) + `<text class="sans bd" font-size="10" x="20" y="8">M</text>`],
    ['Volume track', bars([4, 6, 8, 11, 14])],
    ['Pan track', bars([14, 9, 5, 9, 14])],
  ],
];

document.getElementById('palette').innerHTML = banks.map(bank => '<div class="bank">' + bank.map(([name, art, flag = '']) =>
  flag === 'gap' ? '<span></span>' :
  `<button class="tool ${flag}" aria-label="${name}"><svg width="${flag === 'wide' ? 48 : 24}" height="24">${art}</svg></button>`).join('') + '</div>').join('');

/* ---- score ---- */
/* Each note: [staff step below the top line, finger, finger y, fret, string]; beams: [direction, outer y at start, outer y at end]. */
const systems = [
  { staff: 223.5, tab: 317.5, x0: 531, dx: 18.2, bar: 823.5, x1: 836.7, dx1: 48.4, pick: 286, nums: [1, 2],
    steps: [12,9,10,8,9,6,8,5,6,3,5,2,3,1,2,-1], fing: '1143113311331134', fy: [265,258,260,256,258,254,255,254,269,269,269,269,262,262,262,262],
    frets: '5587557755775578', str: '5454434332322121', beams: [[1,232,225],[1,225,218],[-1,259,251.5],[-1,251.5,244]],
    picks: 'DVDVDVDVDVDVDVDV', picks1: 'DVDVD', steps1: [1,-2,-1,-4,-1], fing1: '11443', fy1: [254,254,254,254,254], frets1: '55888', str1: '10101', beam1: [-1,244.5,237], bend: 1 },
  { staff: 382, tab: 454.5, x0: 520, dx: 18.85, bar: 823.5, x1: 836.7, dx1: 48.5, pick: 442, nums: [3, 4],
    steps: [-4,-1,-2,1,-1,2,1,3,2,5,3,6,5,8,6,9], fing: '4411431133113311', fy: [412,412,412,412,419,419,419,412,426,426,426,412,412,413,412,416],
    frets: '8855875577557755', str: '0101121223233434', beams: [[-1,395,401.5],[-1,401.5,408.5],[-1,408.5,416],[1,376.5,384]],
    picks: 'DVDVDVDVDVDVDVDV', picks1: 'DVDVD', steps1: [8,10,9,12,5], fing1: '34113', fy1: [413,418,416,423,412], frets1: '78557', str1: '45453', beam1: [1,383.5,391] },
  { staff: 519.5, tab: 607.5, x0: 529, dx: 18.31, bar: 823.5, x1: 845, dx1: 46.8, pick: 576, nums: [5, 6],
    steps: [9,12,8,10,6,9,5,8,3,6,2,5,1,3,-1,2], fing: '1134113311331143', fy: [553,560,551,556,549,553,549,551,565,565,565,565,556,556,556,556],
    frets: '5578557755775587', str: '4545343423231212', beams: [[1,521.5,524.5],[1,513,517.5],[-1,549,553.5],[-1,543,545.5]],
    picks: ' D D D D D D D D', picks1: ' D DV', steps1: [-2,1,-4,-1,-1], fing1: '11443', fy1: [551,551,551,551,549], frets1: '55888', str1: '01011', beam1: [-1,538.5,541], mute: 0, bend: 1 },
  { staff: 672, tab: 742, x0: 520, dx: 16.55, bar: 786.5, x1: 799.5, dx1: 55.1, pick: 734, nums: [7, 8],
    steps: [-1,-4,1,-2,2,-1,3,1,5,2,6,3,8,5,9,6], fing: '4411341133113311', fy: [704,704,704,702,709,709,709,702,718,718,718,702,703,702,706,702],
    frets: '8855785577557755', str: '1010212132324343', beams: [[-1,693.5,691],[-1,698.5,696],[-1,707.5,702.5],[1,670.5,665.5]],
    picks: 'D D D D D D D D ', picks1: 'D D D', steps1: [10,8,12,9,5], fing1: '43113', fy1: [708,703,713,706,702], frets1: '87557', str1: '54543', beam1: [1,677.5,674.5], mute: 1, last: 1 },
];
const L = 489.5, R = 1081, SP = 2.44, TS = 7.2;
const stroke = (c, d) => `<path class="${c}" d="${d}"/>`;
const label = (c, x, y, s) => `<text class="${c}" x="${x}" y="${y}">${s}</text>`;
const wave = (x, y, end) => { let d = `M${x} ${y}`; for (let i = 0; x < end; i++) { x += 2.2; d += `L${x.toFixed(1)} ${y + (i % 2 ? .8 : -1)}`; } return stroke('wave', d); };
const pickMark = (k, x, y) => k === 'D' ? `<path d="M${x - 3} ${y + 3}V${y - 3}H${x + 3}V${y + 3}H${x + 2}V${y - .5}H${x - 2}V${y + 3}Z"/>` : k === 'V' ? stroke('vee', `M${x - 2.5} ${y - 4}L${x} ${y + 4}L${x + 2.500} ${y - 4}`) : '';

function drawSystem(s, si) {
  let out = '';
  for (let i = 0; i < 5; i++) out += stroke('staffline', `M${L} ${s.staff + i * SP * 2}H${R}`);
  for (let i = 0; i < 6; i++) out += stroke('staffline', `M${L} ${s.tab + i * TS}H${R}`);
  const b = s.staff + SP * 8, tb = s.tab + TS * 5;
  out += stroke('barline', `M${L} ${s.staff}V${tb}`);
  out += stroke('barline', `M${s.bar} ${s.staff}V${b}M${s.bar} ${s.tab}V${tb}`);
  out += s.last ? stroke('barline', `M1077 ${s.staff}V${b}M1077 ${s.tab}V${tb}`) + stroke('thick', `M1080 ${s.staff}V${b}M1080 ${s.tab}V${tb}`)
    : stroke('barline', `M${R} ${s.staff}V${b}M${R} ${s.tab}V${tb}`);
  out += `<use href="#clef" x="490" y="${s.staff - 6}" width="16" height="36"/>`;
  'TAB'.split('').forEach((c, i) => out += label('tabword', 498.5, s.tab + 12 + i * 10, c));
  out += label('mno', si ? 510 : 522, s.staff - 2, s.nums[0]) + label('mno', s.bar - 2, s.staff - 2, s.nums[1]);

  const group = (xs, steps, [dir, ya, yb]) => {
    const sx = xs.map(x => x + 3 * dir), n = xs.length - 1;
    xs.forEach((x, i) => {
      const y = s.staff + steps[i] * SP, by = ya + (yb - ya) * (sx[i] - sx[0]) / (sx[n] - sx[0]);
      out += head(x, y) + stroke('barline', `M${sx[i]} ${y}V${by + dir * .5}`);
      for (let p = -4; p >= steps[i]; p -= 2) out += stroke('hair', `M${x - 5} ${s.staff + (p + 2) * SP}H${x + 5}`);
      for (let p = 10; p <= steps[i]; p += 2) out += stroke('hair', `M${x - 5} ${s.staff + p * SP}H${x + 5}`);
    });
    [0, 4].forEach(o => {
      const a = ya + o * dir, e = yb + o * dir, t = 2.4 * dir;
      out += `<path class="beam" d="M${sx[0] - .5} ${a}L${sx[n] + .5} ${e}V${e + t}L${sx[0] - .5} ${a + t}Z"/>`;
    });
  };
  const fret = (x, f, st) => `<rect class="mask" x="${x - 3}" y="${s.tab + st * TS - 3}" width="6" height="6"/>` + label('fret', x, s.tab + st * TS + 3, f);
  const xs = s.steps.map((_, i) => s.x0 + i * s.dx), xs1 = s.steps1.map((_, i) => s.x1 + i * s.dx1);
  s.beams.forEach((bm, g) => group(xs.slice(g * 4, g * 4 + 4), s.steps.slice(g * 4, g * 4 + 4), bm));
  group(xs1.slice(0, 4), s.steps1.slice(0, 4), s.beam1);
  const each = (xl, steps, fing, fy, frets, str, picks, limit) => xl.forEach((x, i) => {
    out += label('num', x, fy[i] + 2.5, fing[i]) + pickMark(picks[i], x, s.pick) + fret(x, frets[i], +str[i]);
    if (s.mute !== undefined && i % 2 === s.mute && i < limit) out += label('mute', x - 8, s.staff + steps[i] * SP + 2, 'm');
  });
  each(xs, s.steps, s.fing, s.fy, s.frets, s.str, s.picks, 16);
  each(xs1, s.steps1, s.fing1, s.fy1, s.frets1, s.str1, s.picks1, 4);

  /* closing dotted half note */
  const hx = xs1[4], hy = s.staff + s.steps1[4] * SP;
  out += head(hx, hy, 1) + dot(hx + 6, hy - 1, .8);
  if (s.bend) {
    out += stroke('barline', `M${hx - 3} ${hy}V${hy + 17}`) + stroke('hair', `M${hx + 3} ${hy - 3}L${hx + 16} ${hy - 12}L1073 ${hy - 4}`);
    out += `<ellipse cx="1076" cy="${hy - 2}" rx="2.400" ry="1.600"/>` + stroke('hair', `M1071 ${hy - 5}V${hy}L1073 ${hy - 1}M1073 ${hy + 2}V${hy - 3}L1071 ${hy - 2}`) + stroke('hair', `M1072 ${hy - 2}H1080`);
    const ty = s.tab + TS;
    out += stroke('hair', `M${hx + 4} ${ty - 1}Q1074 ${ty} 1074.500 ${ty - 19}`) + `<path d="M1073 ${ty - 18}H1076L1074.500 ${ty - 22}Z"/>` + label('full', 1074.5, ty - 24, 'full');
  } else out += stroke('barline', `M${hx + 3} ${hy - 1}V${hy - 17}`);
  if (si === 0) out += wave(1031, 206, 1078) + wave(1031, 277, 1078);
  if (si === 1) out += wave(1031, 371.5, 1078) + wave(1031, 434, 1078);
  if (si === 3) out += wave(1020, 661.5, 1076) + wave(1020, 725.5, 1076);
  return out;
}
document.getElementById('score').innerHTML =
  '<ellipse cx="533.500" cy="190" rx="2.400" ry="1.600"/>' + stroke('barline', 'M535.500 190V180') + label('mark', 541, 190, '= 80') + label('mark', 522.5, 209, 'Am') +
  label('meter', 514, 233, '4') + label('meter', 514, 243, '4') +
  systems.map(drawSystem).join('') +
  '<rect class="cursor" x="525.500" y="312" width="11" height="11" rx="2"/>' + stroke('hair', 'M526 317.500H536');

/* ---- mixer ---- */
const tracks = [
  ['Licks', 'guitar', 'salmon', 62], ['Rhythm Guitar', 'axe', 'salmon', 72], ['Bass', 'bass', 'yellow', 72],
  ['Drums', 'drum', 'sky', 72], ['Organ', 'keys', 'sand', 72], ['Electric Piano', 'keys', 'sand', 73],
];
const use = (id, w, h, c = '') => `<svg class="${c}" width="${w}" height="${h}"><use href="#${id}"/></svg>`;
document.getElementById('tracks').innerHTML = tracks.map(([name, icon, color, vol], i) => `
  <div class="trow ${i ? '' : 'sel'}">
    <div class="strip ${color}"></div>${use(icon, 15, 15)}<span class="tno">${i + 1}.</span><span class="tname">${name}</span>
    ${use('eye', 15, 11, i ? 'dim' : '')}${use('mute', 14, 14, 'dim')}${use('phones', 15, 15, 'dim')}
    <input type="range" aria-label="${name} volume" value="${vol}"><b class="auto">A</b>${use('knob', 20, 20)}<b class="auto">A</b>
    ${use('eq', 14, 16, i > 3 ? 'dark' : 'dim')}
    <div class="cells ${color}">${Array.from({ length: 8 }, (_, c) => `<i class="${i || c ? '' : 'here'}"></i>`).join('')}</div>
  </div>`).join('');
```
